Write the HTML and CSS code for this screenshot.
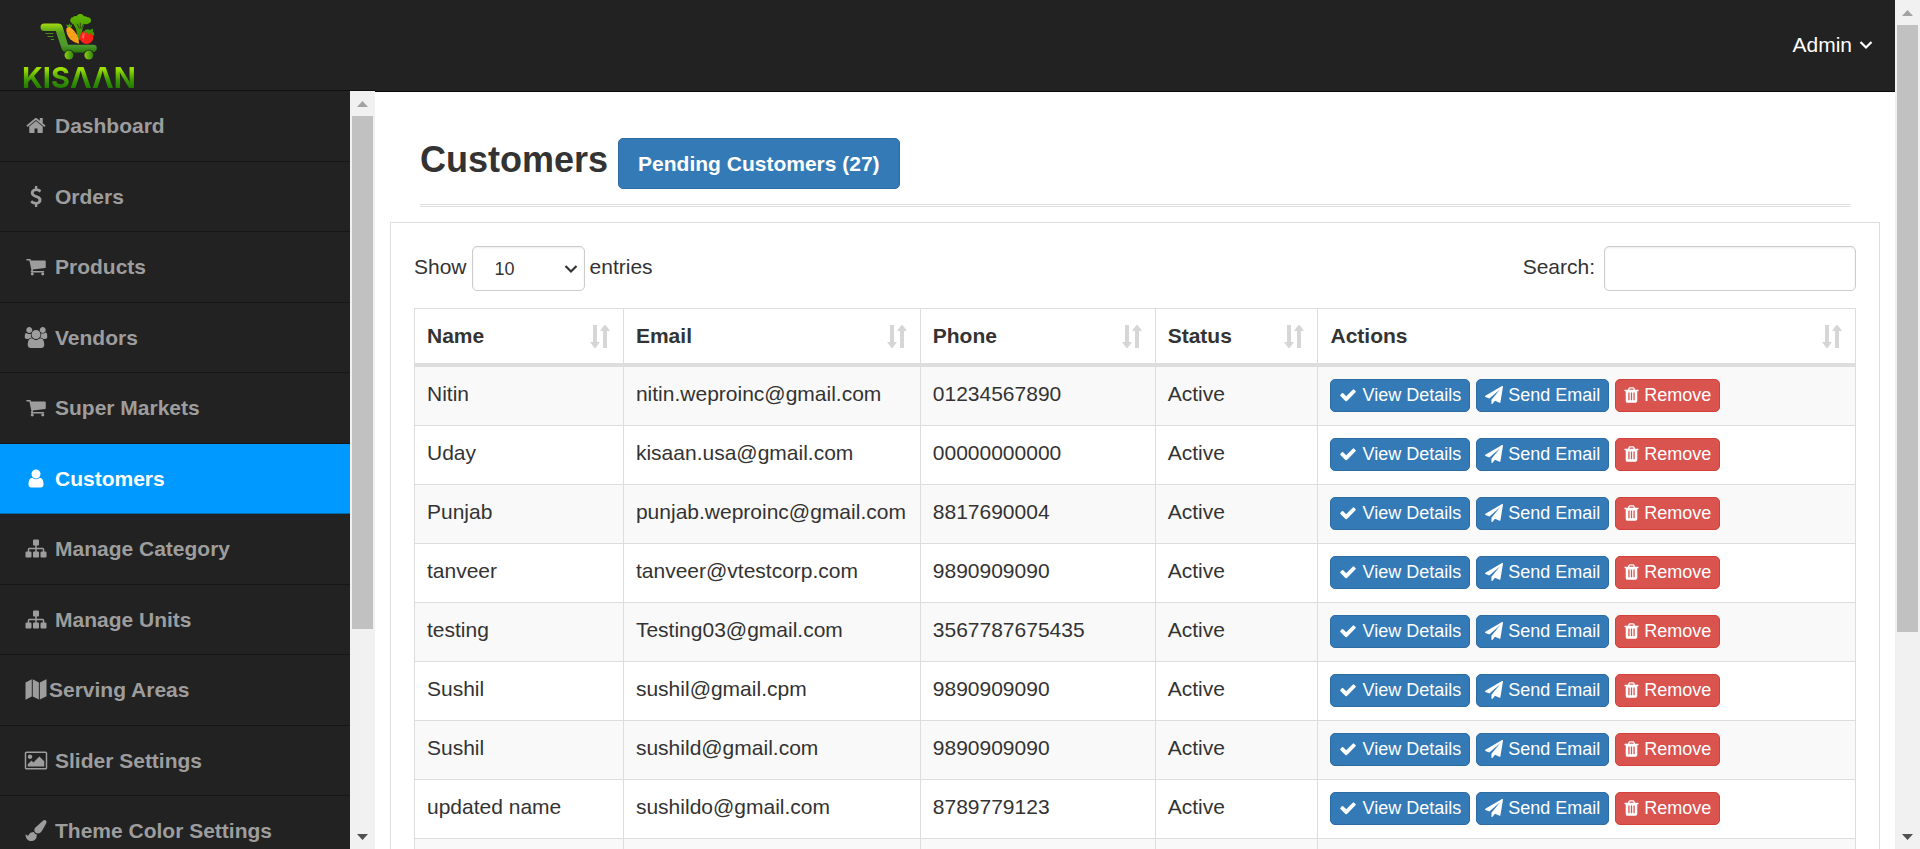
FILE: index.html
```html
<!DOCTYPE html>
<html lang="en">
<head>
<meta charset="utf-8">
<meta name="viewport" content="width=device-width, initial-scale=1">
<title>Customers</title>
<link rel="stylesheet" href="styles.css">
</head>
<body>
<svg class="sprite" aria-hidden="true">
  <symbol id="i-home" viewBox="0 0 1792 1792"><path d="M1472 992v480q0 26-19 45t-45 19h-384v-384h-256v384h-384q-26 0-45-19t-19-45v-480q0-1 .5-3t.5-3l575-474 575 474q1 2 1 6zm223-69l-62 74q-8 9-21 11h-3q-13 0-21-7l-692-577-692 577q-12 8-24 7-13-2-21-11l-62-74q-8-10-7-23.5t11-21.5l719-599q32-26 76-26t76 26l244 204v-195q0-14 9-23t23-9h192q14 0 23 9t9 23v408l219 182q10 8 11 21.5t-7 23.5z"/></symbol>
  <symbol id="i-dollar" viewBox="0 0 1792 1792"><path d="M1362 1185q0 153-99.5 263.5t-258.5 136.5v175q0 14-9 23t-23 9h-135q-13 0-22.5-9.5t-9.5-22.5v-175q-66-9-127.5-31t-101.5-44.5-74-48-46.5-37.5-17.5-18q-17-21-2-41l103-135q7-10 23-12 15-2 24 9l2 2q113 99 243 125 37 8 74 8 81 0 142.5-43t61.5-122q0-28-15-53t-33.5-42-58.5-37.5-66-32-80-32.5q-39-16-61.5-25t-61.5-26.5-62.5-31-56.5-35.5-53.5-42.5-43.5-49-35.5-58-21-66.5-8.5-78q0-138 98-242t255-134v-180q0-13 9.5-22.5t22.5-9.5h135q14 0 23 9t9 23v176q57 6 110.5 23t87 33.5 63.5 37.5 39 29 15 14q17 18 5 38l-81 146q-8 15-23 16-14 3-27-7-3-3-14.5-12t-39-26.5-58.5-32-74.5-26-85.5-11.5q-95 0-155 43t-60 111q0 26 8.5 48t29.5 41.5 39.5 33 56 31 60.5 27 70 27.5q53 20 81 31.5t76 35 75.5 42.5 62 50 53 63.5 31.5 76.5 13 94z"/></symbol>
  <symbol id="i-cart" viewBox="0 0 1792 1792"><path d="M704 1536q0 52-38 90t-90 38-90-38-38-90 38-90 90-38 90 38 38 90zm896 0q0 52-38 90t-90 38-90-38-38-90 38-90 90-38 90 38 38 90zm128-1088v512q0 24-16.5 42.5t-40.5 21.5l-1044 122q13 60 13 70 0 16-24 64h920q26 0 45 19t19 45-19 45-45 19h-1024q-26 0-45-19t-19-45q0-11 8-31.5t16-36 21.5-40 15.5-29.5l-177-823h-204q-26 0-45-19t-19-45 19-45 45-19h256q16 0 28.5 6.5t19.5 15.5 13 24.5 8 26 5.5 29.5 4.5 26h1201q26 0 45 19t19 45z"/></symbol>
  <symbol id="i-users" viewBox="0 0 2048 1792"><path d="M657 896q-162 5-265 128h-134q-82 0-138-40.5t-56-118.5q0-353 124-353 6 0 43.5 21t97.5 42.5 119 21.5q67 0 133-23-5 37-5 66 0 159 81 293zm1071 637q0 120-73 189.5t-194 69.5h-874q-121 0-194-69.5t-73-189.5q0-53 3.5-103.5t14-109 26.5-108.5 43-97.5 62-81 85.5-53.5 111.5-20q10 0 43 21.5t73 48 107 48 135 21.5 135-21.5 107-48 73-48 43-21.5q61 0 111.5 20t85.5 53.5 62 81 43 97.5 26.5 108.5 14 109 3.5 103.5zm-1024-1277q0 106-75 181t-181 75-181-75-75-181 75-181 181-75 181 75 75 181zm704 384q0 159-112.5 271.5t-271.5 112.5-271.5-112.5-112.5-271.5 112.5-271.5 271.5-112.5 271.5 112.5 112.5 271.5zm576 225q0 78-56 118.5t-138 40.5h-134q-103-123-265-128 81-134 81-293 0-29-5-66 66 23 133 23 59 0 119-21.5t97.5-42.5 43.5-21q124 0 124 353zm-128-609q0 106-75 181t-181 75-181-75-75-181 75-181 181-75 181 75 75 181z"/></symbol>
  <symbol id="i-user" viewBox="0 0 1792 1792"><path d="M1536 1399q0 109-62.5 187t-150.5 78h-854q-88 0-150.5-78t-62.5-187q0-85 8.5-160.5t31.5-152 58.5-131 94-89 134.5-34.5q131 128 313 128t313-128q76 0 134.5 34.5t94 89 58.5 131 31.5 152 8.5 160.5zm-256-887q0 159-112.5 271.5t-271.5 112.5-271.5-112.5-112.5-271.5 112.5-271.5 271.5-112.5 271.5 112.5 112.5 271.5z"/></symbol>
  <symbol id="i-sitemap" viewBox="0 0 1792 1792"><path d="M1792 1248v320q0 40-28 68t-68 28h-320q-40 0-68-28t-28-68v-320q0-40 28-68t68-28h96v-192h-512v192h96q40 0 68 28t28 68v320q0 40-28 68t-68 28h-320q-40 0-68-28t-28-68v-320q0-40 28-68t68-28h96v-192h-512v192h96q40 0 68 28t28 68v320q0 40-28 68t-68 28h-320q-40 0-68-28t-28-68v-320q0-40 28-68t68-28h96v-192q0-52 38-90t90-38h512v-192h-96q-40 0-68-28t-28-68v-320q0-40 28-68t68-28h320q40 0 68 28t28 68v320q0 40-28 68t-68 28h-96v192h512q52 0 90 38t38 90v192h96q40 0 68 28t28 68z"/></symbol>
  <symbol id="i-map" viewBox="0 0 22 22"><path d="M0 3.6 6.6.3v18L.6 21.6Q0 21.8 0 21.2zM7.6.3 14 3.6v18L7.600 18.3zM15 3.6 21.300.4q.7-.2.7.5v17.200L15 21.600z"/></symbol>
  <symbol id="i-image" viewBox="-64 0 1920 1792"><path d="M576 576q0 80-56 136t-136 56-136-56-56-136 56-136 136-56 136 56 56 136zm1024 384v448h-1408v-192l320-320 160 160 512-512zm96-704h-1600q-13 0-22.5 9.5t-9.5 22.500v1216q0 13 9.500 22.500t22.500 9.500h1600q13 0 22.500-9.500t9.500-22.500v-1216q0-13-9.500-22.500t-22.500-9.500zm160 32v1216q0 66-47 113t-113 47h-1600q-66 0-113-47t-47-113v-1216q0-66 47-113t113-47h1600q66 0 113 47t47 113z"/></symbol>
  <symbol id="i-brush" viewBox="0 0 1792 1792"><path d="M1615 0q70 0 122.500 46.500t52.500 116.500q0 63-45 151-332 629-465 752-97 91-218 91-126 0-216.500-92.500t-90.500-219.500q0-128 92-212l638-579q59-54 130-54zm-909 1034q39 76 106.500 130t150.500 76l1 71q4 213-129.500 347t-348.500 134q-123 0-218-46.500t-152.500-127.500-86.500-183-29-220q7 5 41 30t62 44.500 59 36.500 46 17q41 0 55-37 25-66 57.500-112.500t69.500-76 88-47.500 103-25.500 125-10.500z"/></symbol>
  <symbol id="i-check" viewBox="0 0 1792 1792"><path d="M1671 566q0 40-28 68l-724 724-136 136q-28 28-68 28t-68-28l-136-136-362-362q-28-28-28-68t28-68l136-136q28-28 68-28t68 28l294 295 656-657q28-28 68-28t68 28l136 136q28 28 28 68z"/></symbol>
  <symbol id="i-send" viewBox="0 0 1792 1792"><path d="M1764 11q33 24 27 64l-256 1536q-5 29-32 45-14 8-31 8-11 0-24-5l-453-185-242 295q-18 23-49 23-13 0-22-4-19-7-30.500-23.500t-11.500-36.500v-349l864-1059-1069 925-395-162q-37-14-40-55-2-40 32-59l1664-960q15-9 32-9 20 0 36 11z"/></symbol>
  <symbol id="i-trash" viewBox="192 0 1408 1792"><path d="M704 1376v-704q0-14-9-23t-23-9h-64q-14 0-23 9t-9 23v704q0 14 9 23t23 9h64q14 0 23-9t9-23zm256 0v-704q0-14-9-23t-23-9h-64q-14 0-23 9t-9 23v704q0 14 9 23t23 9h64q14 0 23-9t9-23zm256 0v-704q0-14-9-23t-23-9h-64q-14 0-23 9t-9 23v704q0 14 9 23t23 9h64q14 0 23-9t9-23zm-544-992h448l-48-117q-7-9-17-11h-317q-10 2-17 11zm928 32v64q0 14-9 23t-23 9h-96v948q0 83-47 143.500t-113 60.500h-832q-66 0-113-58.500t-47-141.500v-952h-96q-14 0-23-9t-9-23v-64q0-14 9-23t23-9h309l70-167q15-37 54-63t79-26h320q40 0 79 26t54 63l70 167h309q14 0 23 9t9 23z"/></symbol>
  <symbol id="i-sort" viewBox="0 0 20 23"><path d="M3 0h4v17h3l-4 5.500q-1 1-2 0L0 17h3zM13 23h4V6h3l-4-5.500q-1-1-2 0L10 6h3z"/></symbol>
  <symbol id="i-chevron" viewBox="0 0 14 10"><path d="M1.500 2 7 7.500 12.500 2" fill="none" stroke="currentColor" stroke-width="2.200"/></symbol>
</svg>

<div class="window">
  <div class="page">
    <header class="topbar">
      <a class="brand" href="#">
        <svg class="brand-cart" viewBox="120 42 177 142" aria-hidden="true">
          <defs>
            <linearGradient id="g-cart" x1="0" y1="0" x2="0" y2="1"><stop offset="0" stop-color="#a4dc12"/><stop offset=".3" stop-color="#54a01a"/><stop offset=".75" stop-color="#4d9a30"/><stop offset="1" stop-color="#2a7a08"/></linearGradient>
            <linearGradient id="g-broc" x1="0" y1="0" x2="0" y2="1"><stop offset="0" stop-color="#62b800"/><stop offset="1" stop-color="#3d8a00"/></linearGradient>
            <linearGradient id="g-wheel" x1="0" y1="0" x2="1" y2="0"><stop offset="0" stop-color="#8fd00c"/><stop offset="1" stop-color="#2f8010"/></linearGradient>
          </defs>
          <path fill="url(#g-broc)" d="M214 68a9 9 0 0 1 5-16 10 10 0 0 1 11-3 12 12 0 0 1 22 0 10 10 0 0 1 10 3 9 9 0 0 1 4 19q-6 4-13 1l-6 18-5 30h-8l-6-34-8-14q-4 1-6-4z"/>
          <path stroke="#222" stroke-width="2" fill="none" d="m232 72 6 14M241 68v18M251 72l-6 14"/>
          <path fill="#48a00a" d="m198 74 7 2 3-6 3 6 6-2-3 8-10 4z"/>
          <path fill="#fba21d" d="M199 86q6-8 15-2 10 8 18 22 6 12 5 26-14-3-26-14-14-15-12-32z"/>
          <path stroke="#e07c08" stroke-width="2" d="m202 100 8-3m1 16 7-4m7-13-6 4m5 24 5-4"/>
          <circle cx="260" cy="112" r="20.500" fill="#fb2018"/><path fill="#ff5a58" d="M246 112q0-10 9-13l-3 20z"/>
          <path fill="#3f9806" d="M256 90q8-4 14 0l10-4-1 8q6 5 4 14-8-2-10-9-4 6-7 6-1-6-5-7-7 2-9 0z"/>
          <path fill="url(#g-cart)" d="M132 71h42q10 0 14 10l16 54h75q12 0 12 10 0 12-14 13h-77q-12 0-16-13l-17-52h-35a11 11 0 0 1 0-22z"/>
          <path stroke="#4c8f16" stroke-width="3" d="M136 101h24m-18 9h18m-8 9h10"/>
          <circle cx="207" cy="166" r="16" fill="#222"/><circle cx="267" cy="166" r="16" fill="#222"/>
          <circle cx="207" cy="166" r="13.500" fill="url(#g-wheel)"/><circle cx="267" cy="166" r="13.500" fill="url(#g-wheel)"/>
        </svg>
        <span class="brand-name">KISΛΛN</span>
      </a>
      <button class="account" type="button">Admin <svg class="account-caret"><use href="#i-chevron"/></svg></button>
    </header>

    <div class="body">
      <nav class="sidebar" aria-label="Main">
        <ul class="menu">
          <li><a class="menu-link" href="#"><svg class="menu-icon"><use href="#i-home"/></svg>Dashboard</a></li>
          <li><a class="menu-link" href="#"><svg class="menu-icon"><use href="#i-dollar"/></svg>Orders</a></li>
          <li><a class="menu-link" href="#"><svg class="menu-icon"><use href="#i-cart"/></svg>Products</a></li>
          <li><a class="menu-link" href="#"><svg class="menu-icon"><use href="#i-users"/></svg>Vendors</a></li>
          <li><a class="menu-link" href="#"><svg class="menu-icon"><use href="#i-cart"/></svg>Super Markets</a></li>
          <li><a class="menu-link active" href="#" aria-current="page"><svg class="menu-icon"><use href="#i-user"/></svg>Customers</a></li>
          <li><a class="menu-link" href="#"><svg class="menu-icon"><use href="#i-sitemap"/></svg>Manage Category</a></li>
          <li><a class="menu-link" href="#"><svg class="menu-icon"><use href="#i-sitemap"/></svg>Manage Units</a></li>
          <li><a class="menu-link tight" href="#"><svg class="menu-icon"><use href="#i-map"/></svg>Serving Areas</a></li>
          <li><a class="menu-link" href="#"><svg class="menu-icon"><use href="#i-image"/></svg>Slider Settings</a></li>
          <li><a class="menu-link" href="#"><svg class="menu-icon"><use href="#i-brush"/></svg>Theme Color Settings</a></li>
        </ul>
      </nav>
      <div class="scrollbar" aria-hidden="true"><i class="arrow up"></i><div class="track"><div class="thumb side-thumb"></div></div><i class="arrow down"></i></div>

      <main class="content">
        <div class="heading">
          <h1 class="title">Customers</h1>
          <a class="btn btn-large" href="#">Pending Customers (27)</a>
        </div>
        <section class="panel">
          <div class="controls">
            <div class="control">
              <label for="length">Show</label>
              <span class="select-box"><select id="length" class="field length"><option>10</option><option>25</option><option>50</option></select><svg class="select-caret"><use href="#i-chevron"/></svg></span>
              <span>entries</span>
            </div>
            <div class="control search-control"><label for="search">Search:</label><input id="search" class="field search" type="search"></div>
          </div>
          <table class="table">
            <colgroup><col class="c-name"><col class="c-email"><col class="c-phone"><col class="c-status"><col></colgroup>
            <thead><tr>
              <th><button class="sort" type="button">Name<svg class="sort-icon"><use href="#i-sort"/></svg></button></th>
              <th><button class="sort" type="button">Email<svg class="sort-icon"><use href="#i-sort"/></svg></button></th>
              <th><button class="sort" type="button">Phone<svg class="sort-icon"><use href="#i-sort"/></svg></button></th>
              <th><button class="sort" type="button">Status<svg class="sort-icon"><use href="#i-sort"/></svg></button></th>
              <th><button class="sort" type="button">Actions<svg class="sort-icon"><use href="#i-sort"/></svg></button></th>
            </tr></thead>
            <tbody>
              <tr><td>Nitin</td><td>nitin.weproinc@gmail.com</td><td>01234567890</td><td>Active</td><td><div class="actions"><a class="btn" href="#"><svg class="btn-icon"><use href="#i-check"/></svg>View Details</a><a class="btn" href="#"><svg class="btn-icon"><use href="#i-send"/></svg>Send Email</a><button class="btn danger" type="button"><svg class="btn-icon trash"><use href="#i-trash"/></svg>Remove</button></div></td></tr>
              <tr><td>Uday</td><td>kisaan.usa@gmail.com</td><td>00000000000</td><td>Active</td><td><div class="actions"><a class="btn" href="#"><svg class="btn-icon"><use href="#i-check"/></svg>View Details</a><a class="btn" href="#"><svg class="btn-icon"><use href="#i-send"/></svg>Send Email</a><button class="btn danger" type="button"><svg class="btn-icon trash"><use href="#i-trash"/></svg>Remove</button></div></td></tr>
              <tr><td>Punjab</td><td>punjab.weproinc@gmail.com</td><td>8817690004</td><td>Active</td><td><div class="actions"><a class="btn" href="#"><svg class="btn-icon"><use href="#i-check"/></svg>View Details</a><a class="btn" href="#"><svg class="btn-icon"><use href="#i-send"/></svg>Send Email</a><button class="btn danger" type="button"><svg class="btn-icon trash"><use href="#i-trash"/></svg>Remove</button></div></td></tr>
              <tr><td>tanveer</td><td>tanveer@vtestcorp.com</td><td>9890909090</td><td>Active</td><td><div class="actions"><a class="btn" href="#"><svg class="btn-icon"><use href="#i-check"/></svg>View Details</a><a class="btn" href="#"><svg class="btn-icon"><use href="#i-send"/></svg>Send Email</a><button class="btn danger" type="button"><svg class="btn-icon trash"><use href="#i-trash"/></svg>Remove</button></div></td></tr>
              <tr><td>testing</td><td>Testing03@gmail.com</td><td>3567787675435</td><td>Active</td><td><div class="actions"><a class="btn" href="#"><svg class="btn-icon"><use href="#i-check"/></svg>View Details</a><a class="btn" href="#"><svg class="btn-icon"><use href="#i-send"/></svg>Send Email</a><button class="btn danger" type="button"><svg class="btn-icon trash"><use href="#i-trash"/></svg>Remove</button></div></td></tr>
              <tr><td>Sushil</td><td>sushil@gmail.cpm</td><td>9890909090</td><td>Active</td><td><div class="actions"><a class="btn" href="#"><svg class="btn-icon"><use href="#i-check"/></svg>View Details</a><a class="btn" href="#"><svg class="btn-icon"><use href="#i-send"/></svg>Send Email</a><button class="btn danger" type="button"><svg class="btn-icon trash"><use href="#i-trash"/></svg>Remove</button></div></td></tr>
              <tr><td>Sushil</td><td>sushild@gmail.com</td><td>9890909090</td><td>Active</td><td><div class="actions"><a class="btn" href="#"><svg class="btn-icon"><use href="#i-check"/></svg>View Details</a><a class="btn" href="#"><svg class="btn-icon"><use href="#i-send"/></svg>Send Email</a><button class="btn danger" type="button"><svg class="btn-icon trash"><use href="#i-trash"/></svg>Remove</button></div></td></tr>
              <tr><td>updated name</td><td>sushildo@gmail.com</td><td>8789779123</td><td>Active</td><td><div class="actions"><a class="btn" href="#"><svg class="btn-icon"><use href="#i-check"/></svg>View Details</a><a class="btn" href="#"><svg class="btn-icon"><use href="#i-send"/></svg>Send Email</a><button class="btn danger" type="button"><svg class="btn-icon trash"><use href="#i-trash"/></svg>Remove</button></div></td></tr>
              <tr><td></td><td></td><td></td><td></td><td></td></tr>
            </tbody>
          </table>
        </section>
      </main>
    </div>
  </div>
  <div class="scrollbar" aria-hidden="true"><i class="arrow up"></i><div class="track"><div class="thumb page-thumb"></div></div><i class="arrow down"></i></div>
</div>
</body>
</html>
```
FILE: styles.css
```css
* { box-sizing: border-box; }

body {
  margin: 0;
  font-family: "Liberation Sans", Arial, sans-serif;
  font-size: 21px;
  line-height: 30px;
  color: #333;
  background: #fff;
}

svg { fill: currentColor; flex: none; }
.sprite { display: none; }
a { text-decoration: none; color: inherit; }
button { font: inherit; color: inherit; cursor: pointer; }

.window { display: flex; height: 100vh; overflow: hidden; }
.page { flex: 1; min-width: 0; display: flex; flex-direction: column; }

/* Top bar */
.topbar {
  flex: none;
  height: 91px;
  display: flex;
  justify-content: space-between;
  background: #222;
  color: #fff;
}
.brand {
  width: 375px;
  padding: 14px 0 0 22px;
  border-bottom: 1px solid #111;
}
.brand-cart { display: block; width: 59px; height: 47px; margin-left: 18px; }
.brand-name {
  display: inline-block;
  margin-top: 2px;
  font: 700 29px/30px Inter, sans-serif;
  background: linear-gradient(#9be000 20%, #3f9a04 55%, #1f7a00 85%);
  background-clip: text;
  -webkit-background-clip: text;
  color: transparent;
}
.account {
  display: flex;
  align-items: center;
  gap: 7px;
  padding: 0 22px 2px 0;
  border: 0;
  background: none;
}
.account-caret { width: 14px; height: 10px; }

/* Sidebar */
.body { flex: 1; min-height: 0; display: flex; }
.sidebar { flex: none; width: 350px; overflow: hidden; background: #222; }
.menu { margin: 0; padding: 0; list-style: none; }
.menu-link {
  display: flex;
  align-items: center;
  gap: 6px;
  padding: 19px 23px;
  border-bottom: 1px solid #161616;
  line-height: 1.5;
  font-weight: 700;
  color: #9d9d9d;
}
.menu-link.active { background: #09f; color: #fff; border-color: #006bb3; }
.menu-icon { width: 26px; height: 21px; }
.menu-link.tight { gap: 0; }

/* Drawn scrollbars */
.scrollbar {
  flex: none;
  width: 25px;
  display: flex;
  flex-direction: column;
  align-items: center;
  background: #f1f1f1;
}
.track { flex: 1; width: 21px; }
.thumb { background: #c1c1c1; }
.side-thumb { height: 72.5%; }
.page-thumb { height: 76%; }
.arrow {
  width: 11px;
  height: 6px;
  margin: 10px 0 9px;
  background: #a3a3a3;
  clip-path: polygon(50% 0, 100% 100%, 0 100%);
}
.arrow.down { background: #505050; clip-path: polygon(0 0, 100% 0, 50% 100%); }

/* Content */
.content {
  flex: 1;
  min-width: 0;
  overflow: hidden;
  padding: 0 15px;
  border-top: 1px solid #080808;
}
.heading {
  margin: 0 30px 15px;
  padding: 46px 0 15px;
  display: flex;
  align-items: flex-start;
  gap: 10px;
  border-bottom: 3px double #ddd;
}
.title { margin: 0; font-size: 36px; line-height: 44px; }
.panel { border: 1px solid #ddd; padding: 23px; }

.controls { display: flex; justify-content: space-between; margin-bottom: 17px; }
.control { display: flex; gap: 5px; }
.control label, .control > span:last-child { padding-top: 6px; }
.search-control { gap: 9px; }
.field {
  height: 45px;
  border: 1px solid #ccc;
  border-radius: 5px;
  box-shadow: inset 0 1px 2px rgba(0, 0, 0, .08);
  background: #fff;
  color: #333;
  font: 18px/26px "Liberation Sans", Arial, sans-serif;
}
.length { width: 113px; padding: 0 22px; appearance: none; }
.search { width: 252px; padding: 7px 15px; appearance: none; }
.select-box { position: relative; }
.select-caret { position: absolute; right: 7px; top: 18px; width: 14px; height: 10px; pointer-events: none; }

/* Table */
.table {
  width: 100%;
  table-layout: fixed;
  border-collapse: separate;
  border-spacing: 0;
  border: solid #ddd;
  border-width: 1px 0 0 1px;
}
.c-name { width: 14.5%; }
.c-email { width: 20.6%; }
.c-phone { width: 16.3%; }
.c-status { width: 11.3%; }
th, td {
  padding: 12px;
  border: solid #ddd;
  border-width: 0 1px 1px 0;
  text-align: left;
  vertical-align: top;
}
th { border-bottom-width: 4px; }
td { height: 59px; padding-bottom: 0; }
tbody tr:nth-child(odd) { background: #f9f9f9; }
.sort {
  display: flex;
  width: 100%;
  align-items: center;
  justify-content: space-between;
  padding: 0 1px 0 0;
  border: 0;
  background: none;
  font-weight: 700;
}
.sort-icon { width: 20px; height: 23px; color: #d6d6d6; }

/* Buttons */
.actions { display: flex; gap: 6px; }
.btn {
  display: inline-flex;
  align-items: center;
  gap: 5px;
  padding: 2px 8px 3px;
  border: 1px solid #2e6da4;
  border-radius: 5px;
  background: #337ab7;
  color: #fff;
  font-size: 18px;
  line-height: 26px;
  white-space: nowrap;
}
.btn-large {
  padding: 10px 19px 9px;
  font-size: 21px;
  font-weight: 700;
  line-height: 30px;
}
.danger { background: #d9534f; border-color: #d43f3a; }
.btn-icon { width: 18px; height: 18px; }
.trash { width: 15px; }
```
